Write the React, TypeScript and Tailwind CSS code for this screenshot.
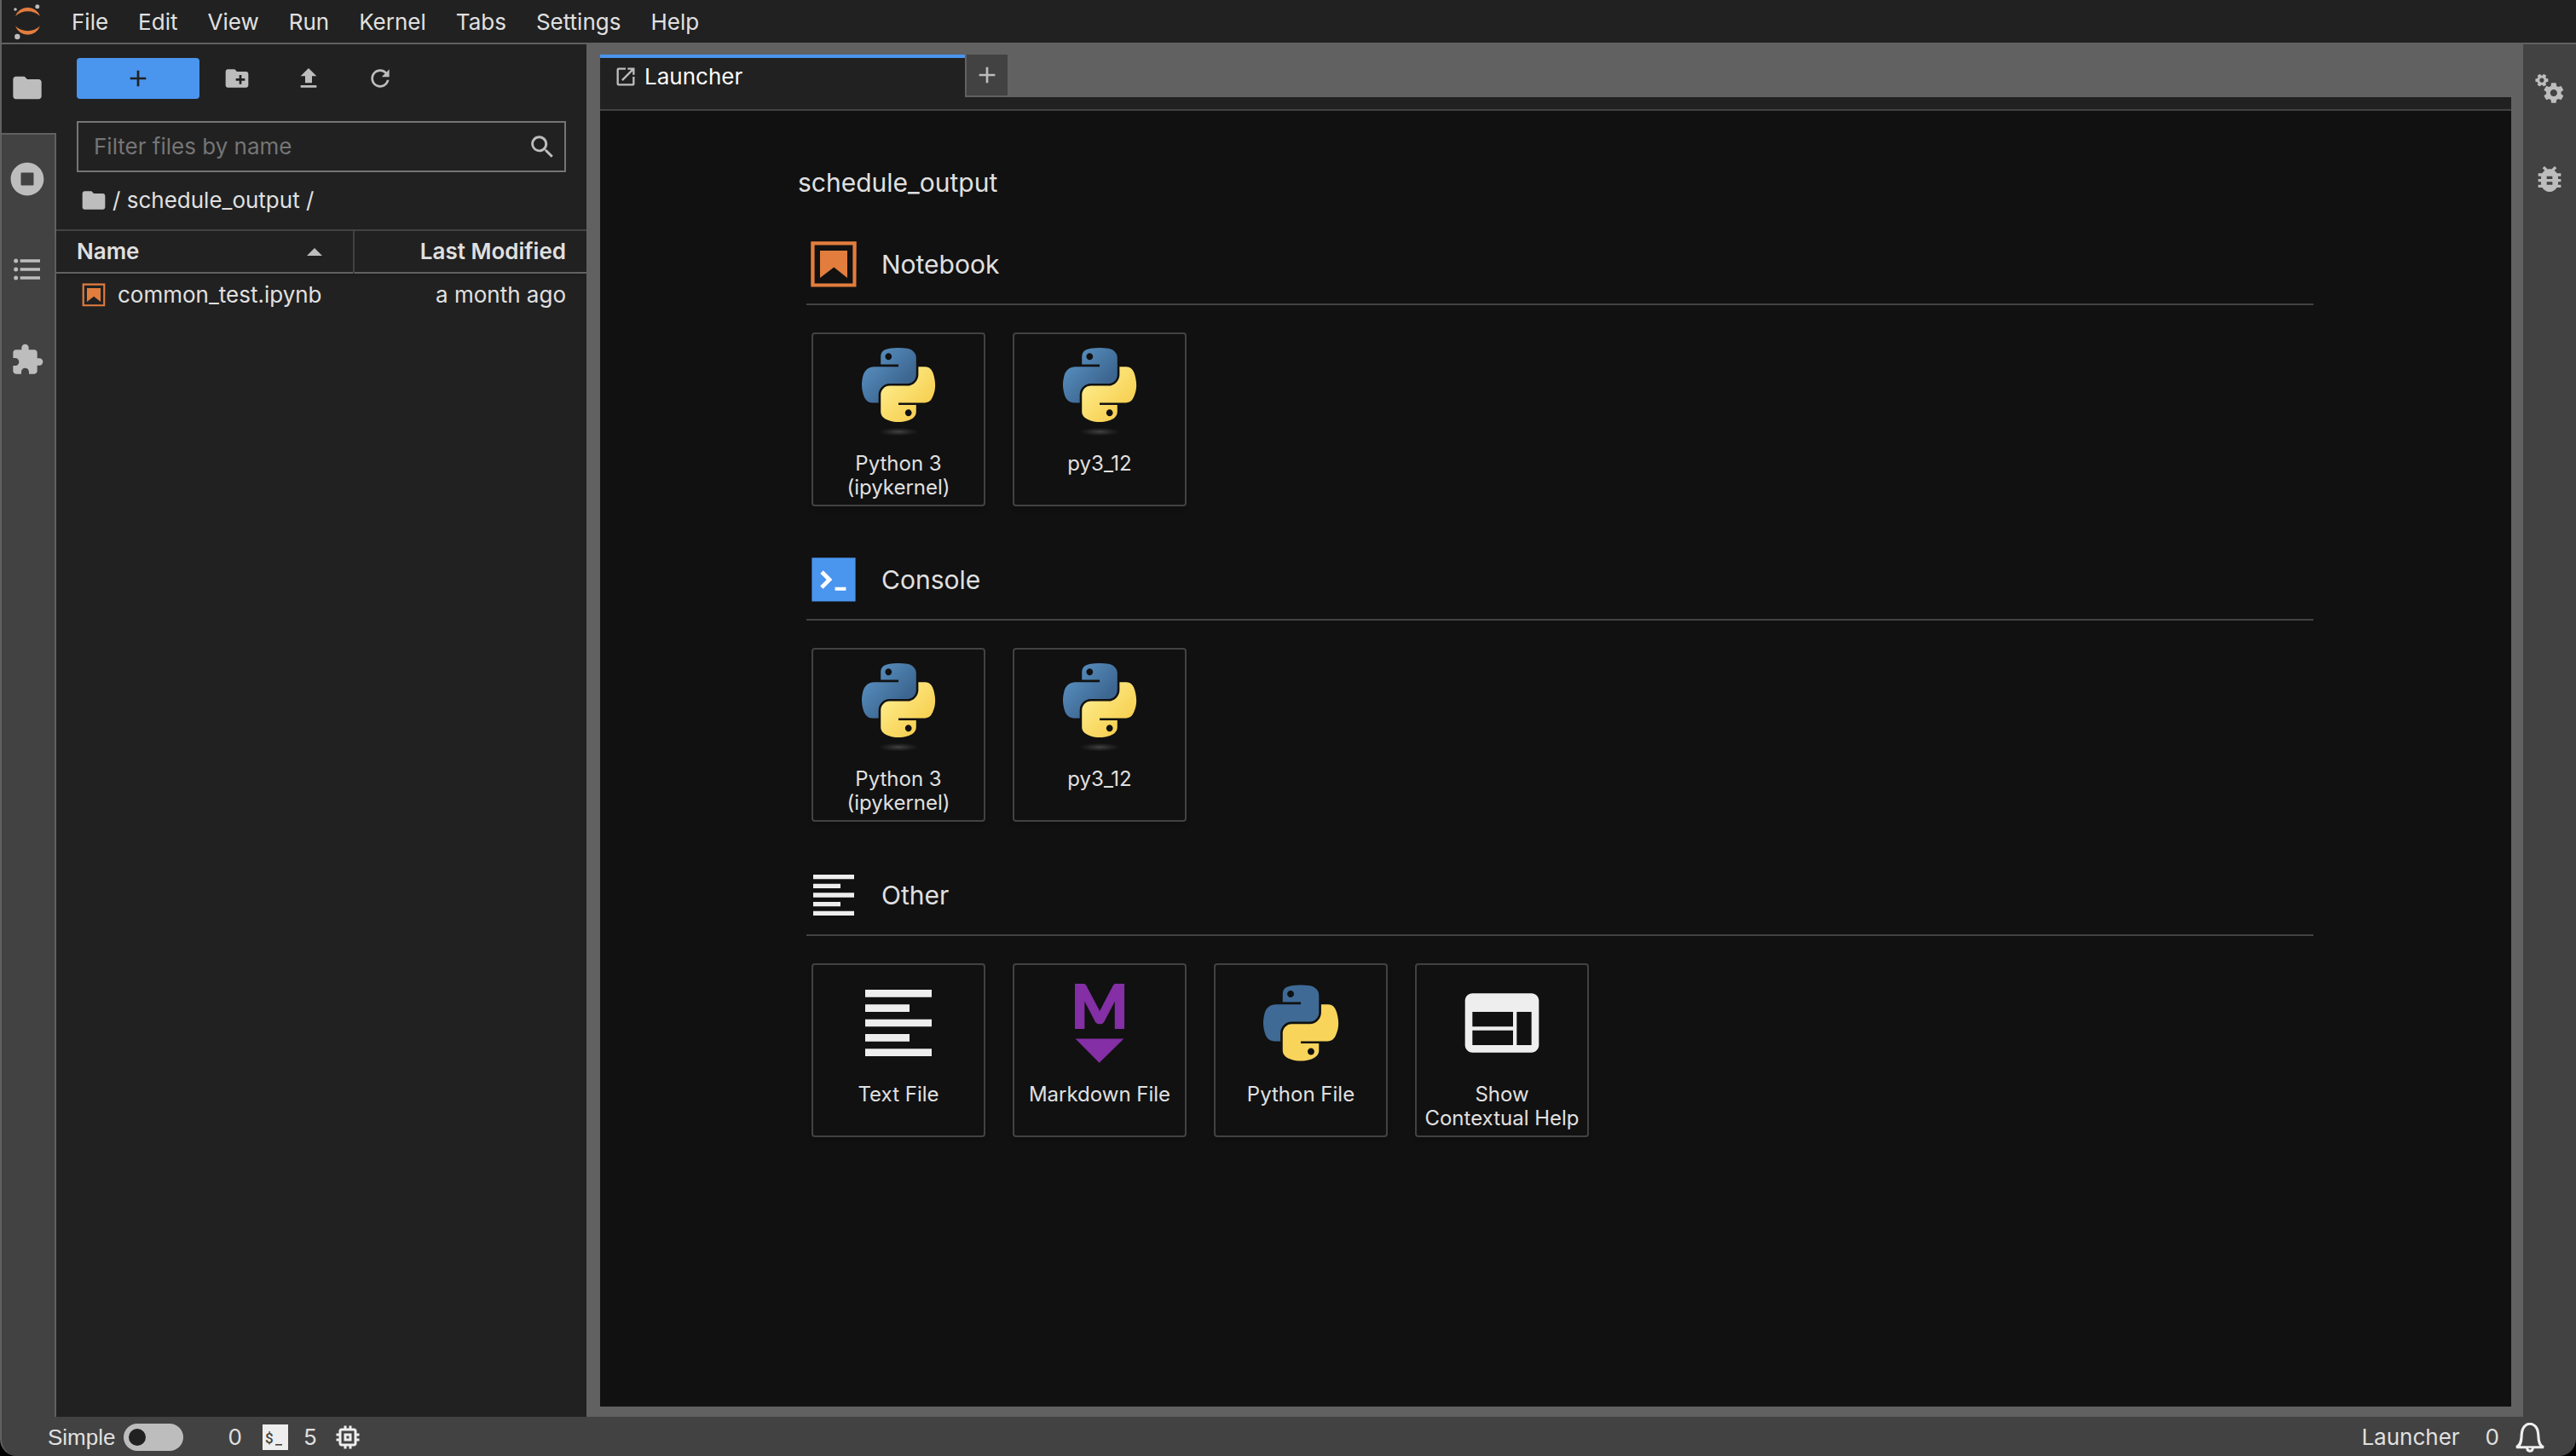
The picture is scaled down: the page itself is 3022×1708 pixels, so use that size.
import { useState } from "react";
import type { ReactNode } from "react";
import {
  MdAdd,
  MdBugReport,
  MdCreateNewFolder,
  MdExtension,
  MdFolder,
  MdMemory,
  MdOpenInNew,
  MdUpload,
  MdWeb,
} from "react-icons/md";
import { FaStopCircle } from "react-icons/fa";

const menus = ["File", "Edit", "View", "Run", "Kernel", "Tabs", "Settings", "Help"];

const PY_BLUE =
  "M54.92 0C50.34.02 45.96.41 42.11 1.09 30.76 3.1 28.7 7.29 28.7 15.03v10.22h26.81v3.41H18.64c-7.79 0-14.62 4.68-16.75 13.59-2.46 10.21-2.57 16.59 0 27.25 1.91 7.94 6.46 13.59 14.25 13.59h9.22v-12.25c0-8.85 7.66-16.66 16.75-16.66h26.78c7.45 0 13.41-6.14 13.41-13.62V15.03c0-7.27-6.13-12.72-13.41-13.94C64.28.33 59.5-.02 54.92 0zm-14.5 8.22c2.77 0 5.03 2.3 5.03 5.12s-2.26 5.09-5.03 5.09-5.03-2.28-5.03-5.09 2.25-5.12 5.03-5.12z";
const PY_YELLOW =
  "M85.64 28.66v11.9c0 9.23-7.83 17-16.75 17H42.11c-7.34 0-13.41 6.28-13.41 13.63v25.53c0 7.27 6.32 11.54 13.41 13.62 8.49 2.5 16.63 2.95 26.78 0 6.75-1.95 13.41-5.89 13.41-13.62V86.5H55.51v-3.41H95.7c7.79 0 10.7-5.44 13.41-13.59 2.8-8.4 2.68-16.48 0-27.25-1.93-7.76-5.6-13.59-13.41-13.59zM70.57 93.31c2.78 0 5.03 2.28 5.03 5.09 0 2.83-2.25 5.13-5.03 5.13-2.77 0-5.03-2.3-5.03-5.13 0-2.81 2.26-5.09 5.03-5.09z";
const GEAR =
  "M14.9 17.45C16.25 17.45 17.35 16.35 17.35 15C17.35 13.65 16.25 12.55 14.9 12.55C13.54 12.55 12.45 13.65 12.45 15C12.45 16.35 13.54 17.45 14.9 17.45ZM20.1 15.68L21.58 16.84C21.71 16.95 21.75 17.13 21.66 17.29L20.26 19.71C20.17 19.86 20 19.92 19.83 19.86L18.09 19.16C17.73 19.44 17.33 19.67 16.91 19.85L16.64 21.7C16.62 21.87 16.47 22 16.3 22H13.5C13.32 22 13.18 21.87 13.15 21.7L12.89 19.85C12.46 19.67 12.07 19.44 11.71 19.16L9.96 19.86C9.81 19.92 9.62 19.86 9.54 19.71L8.14 17.29C8.05 17.13 8.09 16.95 8.22 16.84L9.7 15.68L9.65 15L9.7 14.31L8.22 13.16C8.09 13.05 8.05 12.86 8.14 12.71L9.54 10.29C9.62 10.13 9.81 10.07 9.96 10.13L11.71 10.84C12.07 10.56 12.46 10.32 12.89 10.15L13.15 8.29C13.18 8.13 13.32 8 13.5 8H16.3C16.47 8 16.62 8.13 16.64 8.29L16.91 10.15C17.33 10.32 17.73 10.56 18.09 10.84L19.83 10.13C20 10.07 20.17 10.13 20.26 10.29L21.66 12.71C21.75 12.86 21.71 13.05 21.58 13.16L20.1 14.31L20.15 15L20.1 15.68Z";

const JupyterLogo = () => (
  <svg viewBox="0 0 32 44" className="h-11 w-8" aria-hidden="true">
    <g fill="#e27d3e">
      <path d="M2 16A15.4 15.4 0 0 1 31 16A21.3 21.3 0 0 0 2 16z" />
      <path d="M2 27.5A15.4 15.4 0 0 0 31 27.5A21.3 21.3 0 0 1 2 27.5z" />
    </g>
    <g fill="#bdbdbd">
      <circle cx="27.8" cy="4.7" r="2.5" />
      <circle cx="2" cy="8" r="1.8" />
      <circle cx="4.3" cy="40" r="3.2" />
    </g>
  </svg>
);

const NotebookIcon = ({ className }: { className: string }) => (
  <svg viewBox="0 0 22 22" className={className} fill="#e27d3e" aria-hidden="true">
    <path d="M18.7 3.3v15.4H3.3V3.3h15.4m1.5-1.5H1.8v18.3h18.3l.1-18.3z" />
    <path d="M16.5 16.5l-5.4-4.3-5.6 4.3v-11h11z" />
  </svg>
);

const ConsoleIcon = () => (
  <svg viewBox="0 0 200 200" className="size-16" aria-hidden="true">
    <path fill="#4a95ee" d="M20 19.8h160v159.9H20z" />
    <path
      fill="#fff"
      d="M105 127.3h40v12.8h-40zM51.1 77L74 99.9l-23.3 23.3 10.5 10.5 23.3-23.3L95 99.9 84.5 89.4 61.6 66.5z"
    />
  </svg>
);

const TextIcon = ({ className }: { className: string }) => (
  <svg viewBox="0 0 24 24" className={className} fill="#eee" aria-hidden="true">
    <path d="M15 15H3v2h12v-2zm0-8H3v2h12V7zM3 13h18v-2H3v2zm0 8h18v-2H3v2zM3 3v2h18V3H3z" />
  </svg>
);

// kernel logo with gradients and a soft shadow under it
const KernelIcon = () => (
  <svg viewBox="0 0 104 104" className="size-[104px]" aria-hidden="true">
    <defs>
      <linearGradient id="pyBlue" x1="0" y1="0" x2="0.75" y2="0.7">
        <stop offset="0" stopColor="#5f9acb" />
        <stop offset="1" stopColor="#3c6590" />
      </linearGradient>
      <linearGradient id="pyYellow" x1="0.2" y1="0.2" x2="0.75" y2="0.75">
        <stop offset="0" stopColor="#fdea86" />
        <stop offset="1" stopColor="#f7d154" />
      </linearGradient>
      <radialGradient id="pyShadow">
        <stop offset="0" stopColor="#b8b8b8" stopOpacity="0.3" />
        <stop offset="1" stopColor="#7f7f7f" stopOpacity="0" />
      </radialGradient>
    </defs>
    <g transform="translate(9 0) scale(0.775)">
      <path fill="url(#pyBlue)" d={PY_BLUE} />
      <path fill="url(#pyYellow)" d={PY_YELLOW} />
    </g>
    <ellipse cx="52" cy="98.5" rx="24" ry="5" fill="url(#pyShadow)" />
  </svg>
);

const PythonIcon = () => (
  <svg viewBox="0 0 104 104" className="size-[104px]" aria-hidden="true">
    <g transform="translate(8 7.5) scale(0.793)">
      <path fill="#3f6a96" d={PY_BLUE} />
      <path fill="#f8d45b" d={PY_YELLOW} />
    </g>
  </svg>
);

const MarkdownIcon = () => (
  <svg viewBox="0 0 104 104" className="size-[104px] overflow-visible" fill="#842fa5" aria-hidden="true">
    <text
      x="52"
      y="58"
      fontSize="70"
      fontWeight="900"
      fontFamily="Lato, sans-serif"
      textAnchor="middle"
      stroke="#842fa5"
      strokeWidth="2"
    >
      M
    </text>
    <path d="M23.6 70.4h56.8L51.6 98.8z" />
  </svg>
);

const GearsIcon = () => (
  <svg viewBox="0 0 24 24" className="size-10" fill="currentColor" aria-hidden="true">
    <path fillRule="evenodd" d={GEAR} />
    <path
      fillRule="evenodd"
      transform="translate(6.54 6.08) rotate(30) scale(0.64) translate(-14.9 -15)"
      d={GEAR}
    />
  </svg>
);

const TocIcon = () => (
  <svg viewBox="0 0 24 24" className="size-10" fill="currentColor" aria-hidden="true">
    <path d="M7 5h14v2H7zM7 11h14v2H7zM7 17h14v2H7z" />
    <circle cx="4" cy="6" r="1.5" />
    <circle cx="4" cy="12" r="1.5" />
    <circle cx="4" cy="18" r="1.5" />
  </svg>
);

const RefreshIcon = () => (
  <svg viewBox="0 0 18 18" className="size-8" fill="currentColor" aria-hidden="true">
    <path d="M9 13.5c-2.49 0-4.5-2.01-4.5-4.5S6.51 4.5 9 4.5c1.24 0 2.36.52 3.17 1.33L10 8h5V3l-1.76 1.76C12.15 3.68 10.66 3 9 3 5.69 3 3.01 5.69 3.01 9S5.69 15 9 15c2.97 0 5.43-2.16 5.9-5h-1.52c-.46 2-2.24 3.5-4.38 3.5z" />
  </svg>
);

const SearchIcon = () => (
  <svg viewBox="0 0 18 18" className="size-8 shrink-0" fill="#bdbdbd" aria-hidden="true">
    <path d="M12.1 10.9h-.7l-.2-.2c.8-.9 1.3-2.2 1.3-3.5 0-3-2.4-5.4-5.4-5.4S1.8 4.2 1.8 7.1s2.4 5.4 5.4 5.4c1.3 0 2.5-.5 3.5-1.3l.2.2v.7l4.1 4.1 1.2-1.2-4.1-4.1zm-5 0c-2.1 0-3.7-1.7-3.7-3.7s1.7-3.7 3.7-3.7 3.7 1.7 3.7 3.7-1.6 3.7-3.7 3.7z" />
  </svg>
);

const BellIcon = () => (
  <svg viewBox="0 0 16 16" className="size-9" fill="#eee" aria-hidden="true">
    <path d="M8 .29c-1.4 0-2.7.73-3.6 1.8-1.2 1.5-1.4 3.4-1.5 5.2-.18 2.2-.44 4-2.3 5.3l.28 1.3h5c.026.66.32 1.1.71 1.5.84.61 2 .61 2.8 0 .52-.4.6-1 .71-1.5h5l.28-1.3c-1.9-.97-2.2-3.3-2.3-5.3-.13-1.8-.26-3.7-1.5-5.2-.85-1-2.2-1.8-3.6-1.8zm0 1.4c.88 0 1.9.55 2.5 1.3.88 1.1 1.1 2.7 1.2 4.4.13 1.7.23 3.6 1.3 5.2h-10c1.1-1.6 1.2-3.4 1.3-5.2.13-1.7.3-3.3 1.2-4.4.59-.72 1.6-1.3 2.5-1.3zm-.74 12h1.5c-.0015.28.015.79-.74.79-.73.0016-.72-.53-.74-.79z" />
  </svg>
);

const TerminalIcon = () => (
  <svg viewBox="0 0 30 30" className="size-[30px]" aria-hidden="true">
    <path fill="#eee" d="M0 0h30v30H0z" />
    <text x="3" y="22" fontSize="17" fontWeight="500" fontFamily="Roboto, sans-serif" fill="#424242">
      $
    </text>
    <path fill="#424242" d="M15 23h8v1.6h-8z" />
  </svg>
);

type CardProps = { icon: ReactNode; label: string };

const Card = ({ icon, label }: CardProps) => (
  <button className="flex size-[204px] flex-col items-center rounded border-2 border-[#424242] px-[6px] pt-4 shadow-md">
    {icon}
    <span className="mt-[18px] w-full text-center text-2xl leading-7 text-[#e0e0e0]">{label}</span>
  </button>
);

const Section = ({ icon, title, cards }: { icon: ReactNode; title: string; cards: CardProps[] }) => (
  <section className="ml-[10px]">
    <div className="flex items-center gap-6 border-b-2 border-[#424242] pb-[14px]">
      {icon}
      <h2 className="text-[30px] leading-10">{title}</h2>
    </div>
    <div className="mt-8 ml-[6px] flex flex-wrap gap-8">
      {cards.map((card) => (
        <Card key={card.label} {...card} />
      ))}
    </div>
  </section>
);

const kernels: CardProps[] = [
  { icon: <KernelIcon />, label: "Python 3 (ipykernel)" },
  { icon: <KernelIcon />, label: "py3_12" },
];

const others: CardProps[] = [
  { icon: <TextIcon className="size-[104px]" />, label: "Text File" },
  { icon: <MarkdownIcon />, label: "Markdown File" },
  { icon: <PythonIcon />, label: "Python File" },
  { icon: <MdWeb className="size-[104px] text-[#eee]" />, label: "Show Contextual Help" },
];

const sideTab =
  "flex h-[106px] w-full shrink-0 items-center justify-center border-r-2 border-[#616161] pr-[2px] pb-[2px]";

const App = () => {
  const [filter, setFilter] = useState("");
  const [simple, setSimple] = useState(false);

  return (
    <div className="bg-black font-[Inter,sans-serif] text-[26px] leading-8 text-[#e0e0e0]">
      <div className="flex h-screen flex-col overflow-hidden rounded-b-[20px] border-l-2 border-[#616161] bg-[#424242]">
        <header className="flex h-[52px] shrink-0 items-center border-b-2 border-[#616161] bg-[#212121] pl-[14px]">
          <JupyterLogo />
          <nav className="ml-9 flex gap-[35px] pt-[2px]">
            {menus.map((menu) => (
              <button key={menu}>{menu}</button>
            ))}
          </nav>
        </header>

        <div className="flex min-h-0 flex-1">
          <div className="flex w-16 shrink-0 flex-col text-[#bdbdbd]">
            <button
              aria-label="File Browser"
              className="flex h-[106px] shrink-0 items-center justify-center border-b-2 border-[#616161] bg-[#212121] pr-1 pb-[2px]"
            >
              <MdFolder className="size-10" />
            </button>
            <button aria-label="Running Terminals and Kernels" className={sideTab}>
              <FaStopCircle className="size-10" />
            </button>
            <button aria-label="Table of Contents" className={sideTab}>
              <TocIcon />
            </button>
            <button aria-label="Extension Manager" className={sideTab}>
              <MdExtension className="size-10" />
            </button>
            <div className="flex-1 border-r-2 border-[#616161]" />
          </div>

          <aside className="w-[622px] shrink-0 bg-[#212121]">
            <div className="flex items-center px-6 pt-4 text-[#bdbdbd]">
              <button
                aria-label="New Launcher"
                className="flex h-12 w-36 items-center justify-center rounded bg-[#4a95ee] text-[#212121]"
              >
                <MdAdd className="size-8" />
              </button>
              <div className="ml-7 flex gap-[52px]">
                <button aria-label="New Folder">
                  <MdCreateNewFolder className="size-8" />
                </button>
                <button aria-label="Upload Files">
                  <MdUpload className="size-8" />
                </button>
                <button aria-label="Refresh the file browser">
                  <RefreshIcon />
                </button>
              </div>
            </div>

            <div className="mx-6 mt-[26px] flex h-[60px] items-center border-2 border-[#757575] pr-[10px] pl-[18px]">
              <input
                type="text"
                aria-label="Filter files by name"
                placeholder="Filter files by name"
                value={filter}
                onChange={(e) => setFilter(e.target.value)}
                className="min-w-0 flex-1 bg-transparent outline-none placeholder:text-[#757575]"
              />
              <SearchIcon />
            </div>

            <div className="mt-[17px] flex items-center gap-[6px] px-7">
              <MdFolder className="size-8 text-[#bdbdbd]" />
              <span>/ schedule_output /</span>
            </div>

            <table className="mt-[18px] w-full table-fixed border-collapse">
              <thead>
                <tr className="h-[50px] border-t-2 border-b-2 border-t-[#424242] border-b-[#616161] shadow-md">
                  <th className="w-[349px] border-r-2 border-[#424242] p-0 pr-9 pl-6 text-left font-semibold">
                    <div className="flex items-center justify-between">
                      Name
                      <svg viewBox="0 0 18 9" className="h-[9px] w-[18px]" fill="#bdbdbd" aria-hidden="true">
                        <path d="M0 9L9 0l9 9z" />
                      </svg>
                    </div>
                  </th>
                  <th className="p-0 pr-6 text-right font-semibold">Last Modified</th>
                </tr>
              </thead>
              <tbody>
                <tr className="h-[50px]">
                  <td className="p-0 pl-7">
                    <div className="flex items-center gap-3">
                      <NotebookIcon className="size-8 shrink-0" />
                      common_test.ipynb
                    </div>
                  </td>
                  <td className="p-0 pr-6 text-right">a month ago</td>
                </tr>
              </tbody>
            </table>
          </aside>

          <main className="flex min-w-0 flex-1 flex-col bg-[#616161] px-[14px] pt-3 pb-3 pl-4">
            <div className="flex items-start" role="tablist">
              <button
                role="tab"
                aria-selected="true"
                className="flex h-[50px] w-[428px] items-center gap-2 border-t-4 border-[#4a95ee] bg-[#212121] pb-[2px] pl-4 text-white"
              >
                <MdOpenInNew className="size-7 text-[#bdbdbd]" />
                Launcher
              </button>
              <button
                aria-label="New Launcher"
                className="ml-[2px] flex size-12 items-center justify-center bg-[#424242] text-[#bdbdbd]"
              >
                <MdAdd className="size-8" />
              </button>
            </div>
            <div className="h-4 shrink-0 border-b-2 border-[#424242] bg-[#212121]" />

            <div className="flex-1 bg-[#111] px-[232px] pt-16">
              <h1 className="text-[30px] leading-10">schedule_output</h1>
              <div className="mt-11 flex flex-col gap-[54px]">
                <Section icon={<NotebookIcon className="size-16" />} title="Notebook" cards={kernels} />
                <Section icon={<ConsoleIcon />} title="Console" cards={kernels} />
                <Section icon={<TextIcon className="size-16" />} title="Other" cards={others} />
              </div>
            </div>
          </main>

          <div className="flex w-[62px] shrink-0 flex-col text-[#bdbdbd]">
            <button aria-label="Property Inspector" className="flex h-[106px] items-center justify-center pb-[2px]">
              <GearsIcon />
            </button>
            <button aria-label="Debugger" className="flex h-[106px] items-center justify-center pb-[2px]">
              <MdBugReport className="size-10" />
            </button>
          </div>
        </div>

        <footer className="flex h-[46px] shrink-0 items-center justify-between pt-[2px] pr-9 pl-[54px]">
          <div className="flex items-center">
            <label htmlFor="simple" className="font-['Liberation_Sans',sans-serif]">
              Simple
            </label>
            <input
              id="simple"
              type="checkbox"
              role="switch"
              checked={simple}
              onChange={() => setSimple(!simple)}
              className="ml-[10px] flex h-8 w-[70px] appearance-none items-center rounded-full bg-[#bdbdbd] px-[6px] before:size-5 before:rounded-full before:bg-[#212121] checked:justify-end"
            />
            <button className="ml-[52px] flex items-center gap-6">
              0
              <TerminalIcon />
            </button>
            <button className="ml-[18px] flex items-center gap-[18px]">
              5
              <MdMemory className="size-9 text-[#eee]" />
            </button>
          </div>
          <div className="flex items-center">
            <span>Launcher</span>
            <button aria-label="Notifications" className="ml-[30px] flex items-center gap-[18px]">
              0
              <BellIcon />
            </button>
          </div>
        </footer>
      </div>
    </div>
  );
};

export default App;
